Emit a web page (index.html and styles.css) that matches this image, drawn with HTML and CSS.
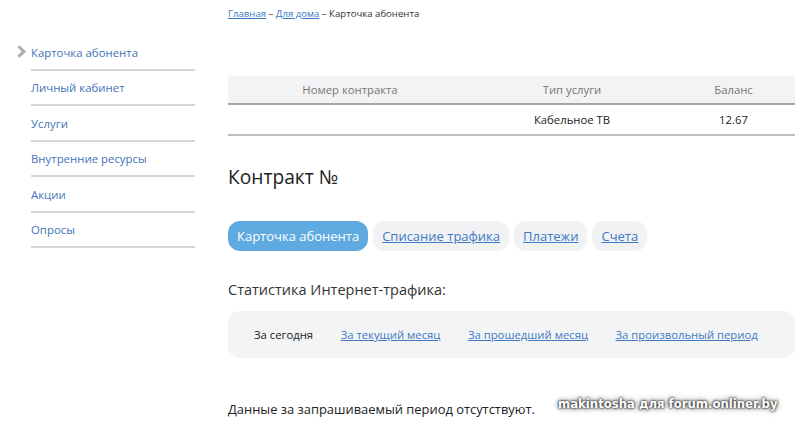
FILE: index.html
```html
<!DOCTYPE html>
<html lang="ru">
<head>
<meta charset="utf-8">
<title>Карточка абонента</title>
<link rel="stylesheet" href="styles.css">
</head>
<body>
<div class="page">
  <aside class="sidebar">
    <ul class="menu">
      <li class="menu-item active"><a href="#">Карточка абонента</a></li>
      <li class="menu-item"><a href="#">Личный кабинет</a></li>
      <li class="menu-item"><a href="#">Услуги</a></li>
      <li class="menu-item"><a href="#">Внутренние ресурсы</a></li>
      <li class="menu-item"><a href="#">Акции</a></li>
      <li class="menu-item"><a href="#">Опросы</a></li>
    </ul>
  </aside>
  <main class="main">
    <div class="crumbs"><a href="#">Главная</a> – <a href="#">Для дома</a> – Карточка абонента</div>
    <table class="contracts">
      <thead>
        <tr><th class="c1">Номер контракта</th><th class="c2">Тип услуги</th><th class="c3">Баланс</th></tr>
      </thead>
      <tbody>
        <tr><td></td><td>Кабельное ТВ</td><td>12.67</td></tr>
      </tbody>
    </table>
    <h1 class="title">Контракт №</h1>
    <nav class="tabs">
      <span class="tab tab-active">Карточка абонента</span>
      <a class="tab" href="#">Списание трафика</a>
      <a class="tab" href="#">Платежи</a>
      <a class="tab" href="#">Счета</a>
    </nav>
    <h2 class="subtitle">Статистика Интернет-трафика:</h2>
    <div class="periods">
      <span class="period period-current">За сегодня</span>
      <a class="period" href="#">За текущий месяц</a>
      <a class="period" href="#">За прошедший месяц</a>
      <a class="period" href="#">За произвольный период</a>
    </div>
    <p class="empty">Данные за запрашиваемый период отсутствуют.</p>
  </main>
</div>
<div class="watermark">makintosha для forum.onliner.by</div>
</body>
</html>
```

FILE: styles.css
```css
html, body {
  margin: 0;
  padding: 0;
  background: #fff;
}
body {
  font-family: "Open Sans", "Noto Sans", sans-serif;
  color: #222;
  width: 800px;
  height: 427px;
  overflow: hidden;
  position: relative;
}
.page {
  display: flex;
}
.sidebar {
  width: 195px;
  flex: none;
  padding-top: 35px;
}
.menu {
  list-style: none;
  margin: 0 0 0 31px;
  padding: 0;
}
.menu-item {
  position: relative;
  padding: 8.5px 0 7px 0;
  line-height: 18px;
  font-size: 11.4px;
  border-bottom: 2px solid #d6d6d6;
}
.menu-item a {
  color: #3f74b8;
  text-decoration: none;
}
.menu-item.active::before {
  content: "";
  position: absolute;
  left: -16px;
  top: 12px;
  width: 6px;
  height: 6px;
  border-right: 3.5px solid #ababab;
  border-top: 3.5px solid #ababab;
  transform: rotate(45deg);
}
.main {
  margin-left: 33px;
  width: 567px;
  flex: none;
}
.crumbs {
  font-size: 9.6px;
  line-height: 12px;
  padding-top: 8px;
  color: #333;
}
.crumbs a {
  color: #3a78c8;
}
.contracts {
  margin-top: 56px;
  width: 567px;
  border-collapse: collapse;
  font-size: 11.3px;
}
.contracts th {
  background: #f2f3f4;
  color: #777;
  font-weight: normal;
  height: 27px;
  border-bottom: 2px solid #a6a6a6;
  text-align: center;
  padding: 0;
}
.contracts td {
  height: 29px;
  padding: 0;
  text-align: center;
  border-bottom: 2px solid #bdbdbd;
  color: #222;
}
.c1 { width: 244px; }
.c2 { width: 200px; }
.title {
  font-size: 19.2px;
  font-weight: normal;
  margin: 27px 0 0 0;
  line-height: 28px;
  color: #1e1e1e;
}
.tabs {
  display: flex;
  gap: 5px;
  margin-top: 30px;
}
.tab {
  display: block;
  height: 30px;
  line-height: 30px;
  padding: 0 9px;
  border-radius: 12px;
  background: #f1f2f4;
  color: #3f7ac2;
  font-size: 13px;
  text-decoration: underline;
}
.tab-active {
  background: #5eaae1;
  color: #fff;
  text-decoration: none;
}
.subtitle {
  font-size: 14.5px;
  font-weight: normal;
  color: #333;
  margin: 29px 0 0 0;
  line-height: 20px;
}
.periods {
  margin-top: 11px;
  height: 47px;
  background: #f3f4f6;
  border-radius: 12px;
  display: flex;
  align-items: center;
  padding-left: 26px;
  gap: 27.5px;
  font-size: 11.3px;
}
.period {
  color: #3f7ac2;
  text-decoration: underline;
}
.period-current {
  color: #222;
  text-decoration: none;
}
.empty {
  margin: 41px 0 0 0;
  font-size: 12.9px;
  line-height: 20px;
  color: #222;
}
.watermark {
  position: absolute;
  left: 558px;
  top: 397px;
  font-family: "DejaVu Sans", sans-serif;
  font-weight: bold;
  font-size: 11.7px;
  color: #fff;
  text-shadow: 0 0 2px #222, 0 0 3px #333, 0 0 6px #666;
}
```
